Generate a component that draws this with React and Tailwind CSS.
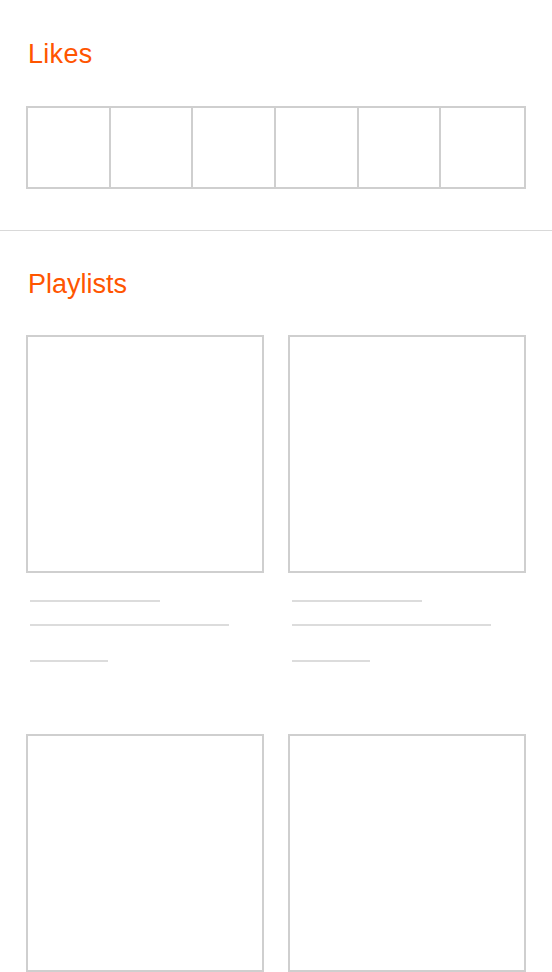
import React from 'react';

const PlaylistCard = () => {
  return (
    <div className="flex flex-col">
      {/* Artwork placeholder */}
      <div className="w-full aspect-square border-2 border-[#cfcfcf]" />

      {/* Text placeholders */}
      <div className="px-[4px] pt-[27px] flex flex-col">
        <div className="h-[2px] w-[130px] bg-[#dcdcdc]" />
        <div className="h-[2px] w-[199px] bg-[#dcdcdc] mt-[22px]" />
        <div className="h-[2px] w-[78px] bg-[#dcdcdc] mt-[34px]" />
      </div>
    </div>
  );
};

const App = () => {
  return (
    <div className="w-[552px] min-h-screen bg-white font-['Liberation_Sans',Arial,sans-serif]">
      {/* Likes */}
      <section className="px-[26px] pt-[38px] pb-[41px]">
        <h2 className="pl-[2px] text-[27px] leading-[32px] text-[#ff5500] font-normal tracking-[0.3px]">
          Likes
        </h2>
        <div className="mt-[36px] grid grid-cols-6 border-2 border-[#cfcfcf] divide-x-2 divide-[#cfcfcf]">
          {[0, 1, 2, 3, 4, 5].map((i) => (
            <div key={i} className="h-[79px]" />
          ))}
        </div>
      </section>

      <div className="h-px bg-[#d9d9d9]" />

      {/* Playlists */}
      <section className="px-[26px] pt-[37px]">
        <h2 className="pl-[2px] text-[27px] leading-[32px] text-[#ff5500] font-normal">
          Playlists
        </h2>
        <div className="mt-[35px] grid grid-cols-2 gap-x-[24px] gap-y-[72px]">
          <PlaylistCard />
          <PlaylistCard />
          <PlaylistCard />
          <PlaylistCard />
        </div>
      </section>
    </div>
  );
};

export default App;
